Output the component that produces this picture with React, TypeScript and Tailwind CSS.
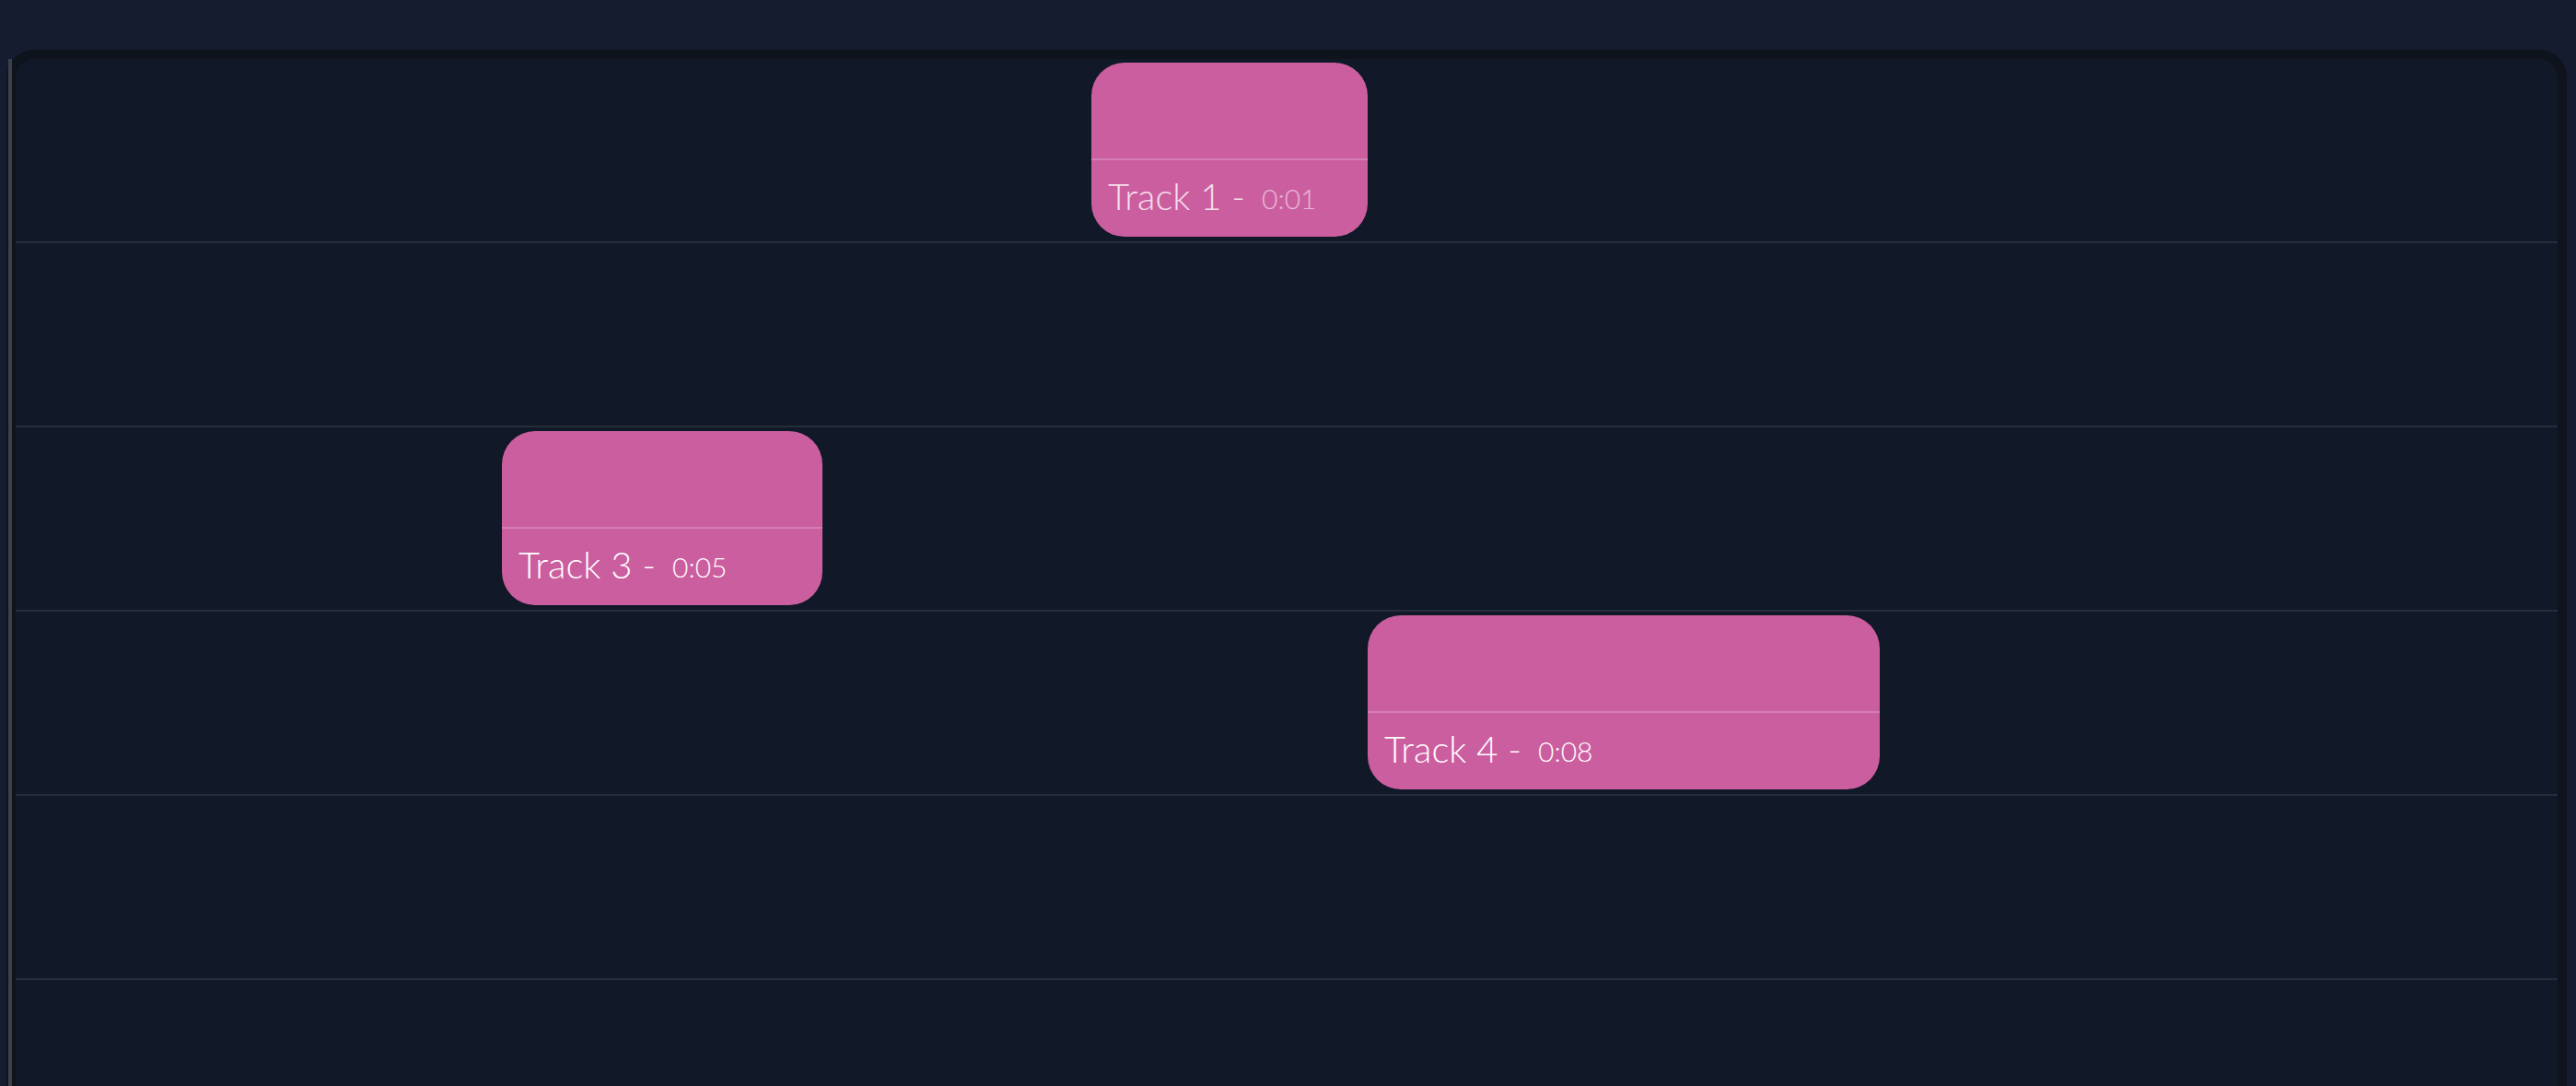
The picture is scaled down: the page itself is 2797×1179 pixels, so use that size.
type Clip = {
  id: number
  row: number
  left: number
  width: number
  time: string
  dim?: boolean
}

const clips: Clip[] = [
  { id: 1, row: 0, left: 1168, width: 300, time: '0:01', dim: true },
  { id: 3, row: 2, left: 528, width: 348, time: '0:05' },
  { id: 4, row: 3, left: 1468, width: 556, time: '0:08' },
]

const rows = [0, 1, 2, 3, 4, 5]

function ClipBlock({ clip }: { clip: Clip }) {
  return (
    <div
      className="absolute top-[4px] flex h-[189px] flex-col overflow-hidden rounded-[36px] bg-[#cb5e9f]"
      style={{ left: clip.left, width: clip.width }}
    >
      <div className="h-[106px] border-b-2 border-[#d47fb3]" />
      <div className="flex flex-1 items-center gap-[18px] pb-[6px] pl-[18px]">
        <span
          className={
            clip.dim
              ? 'text-[40px] font-light leading-none text-white/80'
              : 'text-[40px] font-light leading-none text-white'
          }
        >
          Track {clip.id} -
        </span>
        <span
          className={
            clip.dim
              ? 'pt-[4px] text-[30px] font-light leading-none text-white/55'
              : 'pt-[4px] text-[30px] font-light leading-none text-white'
          }
        >
          {clip.time}
        </span>
      </div>
    </div>
  )
}

export default function App() {
  return (
    <div
      className="h-[1179px] overflow-hidden bg-[#161c2f] pt-[54px] pl-[7px] pr-[10px]"
      style={{ fontFamily: 'Lato, "Open Sans", sans-serif' }}
    >
      <div className="relative h-[1300px] rounded-[30px] border-[10px] border-[#0f131c] bg-[#111827]">
        <div className="absolute top-0 -left-[8px] h-full w-[4px] bg-[#3b404d]" />
        {rows.map((row) => (
          <div key={row} className="relative h-[200px] border-b-2 border-[#272d3a]">
            {clips
              .filter((clip) => clip.row === row)
              .map((clip) => (
                <ClipBlock key={clip.id} clip={clip} />
              ))}
          </div>
        ))}
      </div>
    </div>
  )
}
